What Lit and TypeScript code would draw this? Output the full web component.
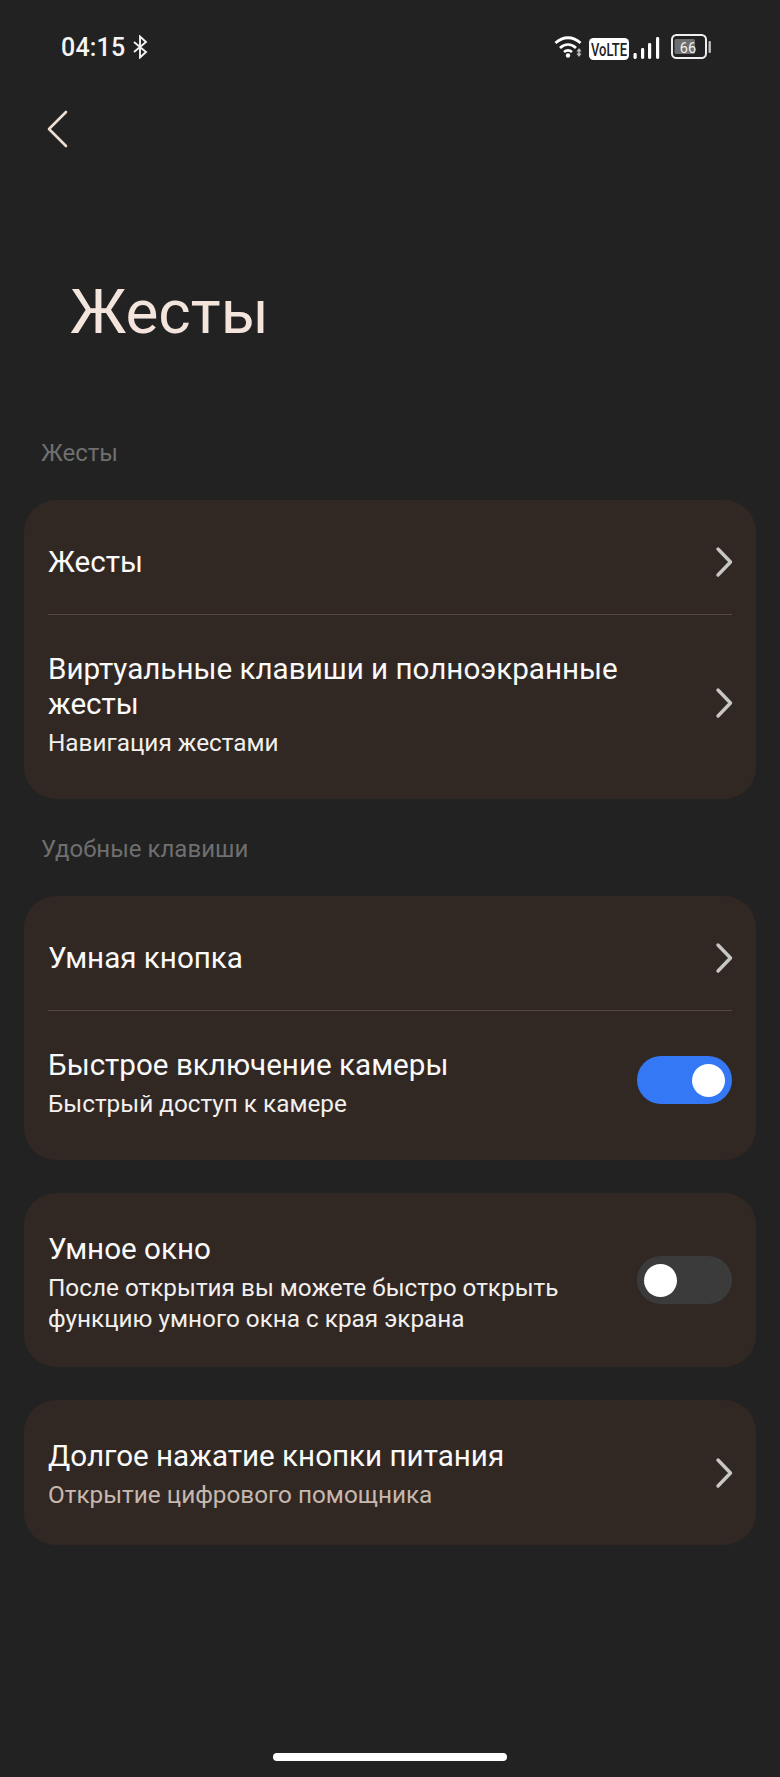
import { LitElement, html, css } from "lit";
import { customElement } from "lit/decorators.js";

const chevron = (cls = "") => html`<svg class="chev ${cls}" width="18" height="32" viewBox="0 0 18 32"><path d="M3 3 L15.5 16 L3 29" fill="none" stroke="#c9c7c5" stroke-width="3.4" stroke-linecap="round" stroke-linejoin="round"/></svg>`;

@customElement("app-root")
export class AppRoot extends LitElement {
  static styles = css`
    :host { display: block; width: 780px; height: 1777px; background: #222222; font-family: Roboto, "Noto Sans", sans-serif; position: relative; overflow: hidden; color: #fff; }
    .status { height: 94px; padding: 30px 66px 0 61px; box-sizing: border-box; display: flex; justify-content: space-between; align-items: flex-start; }
    .left { display: flex; align-items: center; gap: 7px; height: 34px; }
    .time { font-size: 25px; font-weight: 500; color: #f5f5f5; letter-spacing: 0.2px; }
    .right { display: block; height: 34px; }
    .back { display: block; margin: 16px 0 0 46px; }
    h1 { margin: 126px 0 0 70px; font-size: 62px; line-height: 76px; font-weight: 400; color: #f4e5dc; }
    .sec { margin: 0 0 0 41px; font-size: 24px; line-height: 28px; color: #6f6f6f; }
    .s1 { margin-top: 89px; }
    .s2 { margin-top: 36px; }
    .card { margin: 33px 24px 0; background: #322823; border-radius: 32px; padding: 0 24px; }
    .row { display: flex; align-items: center; justify-content: space-between; gap: 20px; box-sizing: border-box; }
    .row + .row { border-top: 1px solid #54483f; }
    .first { height: 114px; padding-top: 10px; }
    .virt { height: 185px; padding-bottom: 5px; }
    .cam { height: 150px; padding-bottom: 5px; }
    .win { height: 174px; padding-top: 6px; }
    .pow { height: 145px; padding-top: 4px; }
    .t { font-size: 29.6px; line-height: 35px; color: #fafafa; }
    .sub { font-size: 24.32px; line-height: 31px; color: #f2f0ee; margin-top: 5px; }
    .sub.dim { color: #c6b8ae; }
    .txt { flex: 1; }
    .chev { flex: none; margin-right: -1px; }
    .chev.up { margin-bottom: 4px; }
    .sw { flex: none; width: 95px; height: 48px; border-radius: 24px; display: flex; align-items: center; padding: 0 7px; box-sizing: border-box; }
    .sw.on { background: #3478f6; justify-content: flex-end; margin-bottom: 6px; }
    .sw.off { background: #3b3b3b; justify-content: flex-start; margin-bottom: 6px; }
    .knob { width: 33px; height: 33px; border-radius: 50%; background: #fff; }
    .home { position: absolute; left: 273px; top: 1753px; width: 234px; height: 8px; border-radius: 4px; background: #fff; }
  `;

  render() {
    return html`
      <div class="status">
        <div class="left">
          <span class="time">04:15</span>
          <svg width="16" height="24" viewBox="0 0 16 24"><path d="M2 7 L14 17 L8 22.5 V1.5 L14 7 L2 17" fill="none" stroke="#f2f2f2" stroke-width="1.9"/></svg>
        </div>
        <svg class="right" width="162" height="34" viewBox="0 0 162 34">
          <g fill="none" stroke="#fff" stroke-width="2.8">
            <path d="M3.5 13 C 11 6, 21 6, 28.5 13"/>
            <path d="M8 18 C 13 13.5, 19 13.5, 24 18"/>
            <path d="M12 22 C 14.5 20, 17.5 20, 20 22"/>
          </g>
          <circle cx="16" cy="25.5" r="2.2" fill="#fff"/>
          <path d="M27 18 l2.6 3.5 h-1.8 v2 h1.8 l-2.6 3.5 l-2.6 -3.5 h1.8 v-2 h-1.8 z" fill="#bdbdbd"/>
          <rect x="37" y="8" width="40" height="22" rx="4.5" fill="#fff"/>
          <text x="57" y="26" text-anchor="middle" font-size="19" font-family="Roboto" font-weight="500" fill="#222" textLength="36" lengthAdjust="spacingAndGlyphs">VoLTE</text>
          <rect x="81.5" y="23" width="3.2" height="6" rx="1.4" fill="#fff"/>
          <rect x="89" y="18" width="3.2" height="11" rx="1.4" fill="#fff"/>
          <rect x="96" y="13" width="3.2" height="16" rx="1.4" fill="#fff"/>
          <rect x="104" y="7" width="3.2" height="22" rx="1.4" fill="#fff"/>
          <rect x="120" y="5" width="34" height="23" rx="4.5" fill="none" stroke="#efefef" stroke-width="2"/>
          <rect x="122.5" y="9" width="20.5" height="15" rx="1.5" fill="#6e6e6e"/>
          <text x="136" y="22.5" text-anchor="middle" font-size="14.5" font-family="Roboto" fill="#efefef">66</text>
          <rect x="156.5" y="11" width="2.4" height="12" rx="1" fill="#bdbdbd"/>
        </svg>
      </div>
      <svg class="back" width="24" height="38" viewBox="0 0 24 38"><path d="M20 2 L3 19 L20 36" fill="none" stroke="#eedfd5" stroke-width="2.6" stroke-linecap="round" stroke-linejoin="round"/></svg>

      <h1>Жесты</h1>
      <div class="sec s1">Жесты</div>
      <div class="card">
        <div class="row first"><div class="txt t">Жесты</div>${chevron()}</div>
        <div class="row virt">
          <div class="txt"><div class="t">Виртуальные клавиши и полноэкранные жесты</div><div class="sub">Навигация жестами</div></div>${chevron("up")}
        </div>
      </div>
      <div class="sec s2">Удобные клавиши</div>
      <div class="card">
        <div class="row first"><div class="txt t">Умная кнопка</div>${chevron()}</div>
        <div class="row cam">
          <div class="txt"><div class="t">Быстрое включение камеры</div><div class="sub">Быстрый доступ к камере</div></div>
          <div class="sw on"><div class="knob"></div></div>
        </div>
      </div>
      <div class="card">
        <div class="row win">
          <div class="txt"><div class="t">Умное окно</div><div class="sub">После открытия вы можете быстро открыть функцию умного окна с края экрана</div></div>
          <div class="sw off"><div class="knob"></div></div>
        </div>
      </div>
      <div class="card">
        <div class="row pow">
          <div class="txt"><div class="t">Долгое нажатие кнопки питания</div><div class="sub dim">Открытие цифрового помощника</div></div>${chevron("up")}
        </div>
      </div>
      <div class="home"></div>
    `;
  }
}
